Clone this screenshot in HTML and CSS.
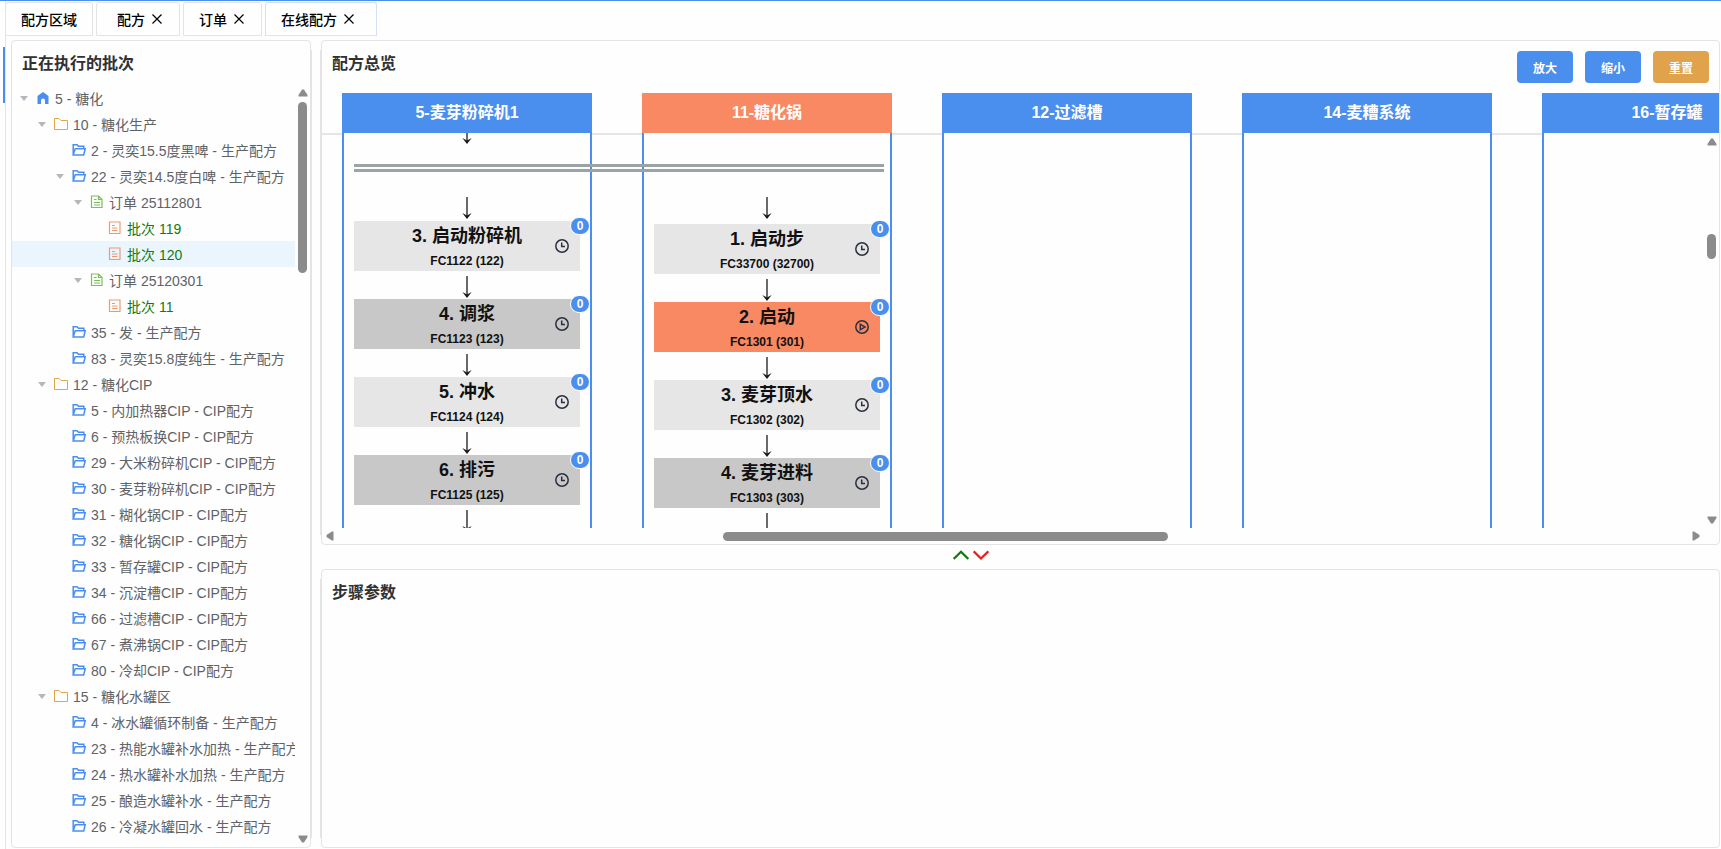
FILE: index.html
```html
<!DOCTYPE html>
<html lang="zh-CN">
<head>
  <meta charset="UTF-8">
  <title>在线配方</title>
  <link rel="stylesheet" href="styles.css">
</head>
<body>

  <svg class="sprite" aria-hidden="true">
    <symbol id="home" viewBox="0 0 14 14"><path fill="currentColor" d="M7 1 1.500 5v8H5V9.500a2 2 0 0 1 4 0V13h3.500V5z"/></symbol>
    <symbol id="folder" viewBox="0 0 14 14"><path fill="none" stroke="currentColor" d="M.5 1.500h4.500l2 2h6.500v9H.5z"/></symbol>
    <symbol id="opened" viewBox="0 0 14 14"><path fill="none" stroke="currentColor" stroke-width="1.500" d="M1.200 12V1.700H5l1.500 1.600h5.300V5.500M1.200 12l2-6.200h10l-1.500 6.200z"/></symbol>
    <symbol id="order" viewBox="0 0 14 14"><path fill="none" stroke="currentColor" stroke-width="1.200" d="M1.500 1h7l3.500 3.500v8H1.500zM8.500 1v3.500H12M4 4.500h2.500M4 7.500h6M4 10h6"/></symbol>
    <symbol id="batch" viewBox="0 0 14 14"><path fill="none" stroke="currentColor" stroke-width="1.200" d="M1.500 1h10.500v11.500H1.500zM4 4.500h3M4 7h5.500M4 9.500h5.500"/></symbol>
    <symbol id="close" viewBox="0 0 10 10"><path fill="none" stroke="currentColor" stroke-width="1.200" d="M.5.5l9 9M9.500.5l-9 9"/></symbol>
    <symbol id="arrow" viewBox="0 0 10 22"><path fill="none" stroke="currentColor" stroke-width="1.300" d="M5 0v20"/><path fill="currentColor" d="M.3 16 5 18.500 9.700 16 5 22z"/></symbol>
    <symbol id="clock" viewBox="0 0 14 14"><circle cx="7" cy="7" r="6.200" fill="none" stroke="currentColor" stroke-width="1.500"/><path fill="none" stroke="currentColor" stroke-width="1.500" d="M6.700 3.500v4H10"/></symbol>
    <symbol id="play" viewBox="0 0 14 14"><circle cx="7" cy="7" r="6.200" fill="none" stroke="currentColor" stroke-width="1.500"/><path fill="none" stroke="currentColor" stroke-width="1.500" d="M5.300 4.200v5.600L10 7z"/></symbol>
    <symbol id="up" viewBox="0 0 16 10"><path fill="none" stroke="currentColor" stroke-width="2.200" d="M.7 8.900 8 1.700l7.300 7.200"/></symbol>
    <symbol id="down" viewBox="0 0 16 10"><path fill="none" stroke="currentColor" stroke-width="2.200" d="M.7 1.300 8 8.500l7.300-7.200"/></symbol>
    <symbol id="tri" viewBox="0 0 10 8"><path fill="currentColor" d="M4 .5h2L9.500 6v1.500h-9V6z"/></symbol>
  </svg>

  <div class="app">
    <div class="rail"></div>
    <main class="main">
      <nav class="tabs">
        <div class="tab"><a href="#">配方区域</a></div>
        <div class="tab tab-wide"><a href="#">配方</a><button aria-label="关闭"><svg><use href="#close"/></svg></button></div>
        <div class="tab"><a href="#">订单</a><button aria-label="关闭"><svg><use href="#close"/></svg></button></div>
        <div class="tab active"><a href="#">在线配方</a><button aria-label="关闭"><svg><use href="#close"/></svg></button></div>
      </nav>

      <div class="content">
        <section class="card side">
          <h2>正在执行的批次</h2>
          <div class="tree-wrap">
            <ul class="tree">
              <li class="l0 open"><svg class="blue"><use href="#home"/></svg>5 - 糖化</li>
              <li class="l1 open"><svg class="gold"><use href="#folder"/></svg>10 - 糖化生产</li>
              <li class="l2"><svg class="blue"><use href="#opened"/></svg>2 - 灵奕15.5度黑啤 - 生产配方</li>
              <li class="l2 open"><svg class="blue"><use href="#opened"/></svg>22 - 灵奕14.5度白啤 - 生产配方</li>
              <li class="l3 open"><svg class="green"><use href="#order"/></svg>订单 25112801</li>
              <li class="l4 batch"><svg class="orange"><use href="#batch"/></svg>批次 119</li>
              <li class="l4 batch current"><svg class="orange"><use href="#batch"/></svg>批次 120</li>
              <li class="l3 open"><svg class="green"><use href="#order"/></svg>订单 25120301</li>
              <li class="l4 batch"><svg class="orange"><use href="#batch"/></svg>批次 11</li>
              <li class="l2"><svg class="blue"><use href="#opened"/></svg>35 - 发 - 生产配方</li>
              <li class="l2"><svg class="blue"><use href="#opened"/></svg>83 - 灵奕15.8度纯生 - 生产配方</li>
              <li class="l1 open"><svg class="gold"><use href="#folder"/></svg>12 - 糖化CIP</li>
              <li class="l2"><svg class="blue"><use href="#opened"/></svg>5 - 内加热器CIP - CIP配方</li>
              <li class="l2"><svg class="blue"><use href="#opened"/></svg>6 - 预热板换CIP - CIP配方</li>
              <li class="l2"><svg class="blue"><use href="#opened"/></svg>29 - 大米粉碎机CIP - CIP配方</li>
              <li class="l2"><svg class="blue"><use href="#opened"/></svg>30 - 麦芽粉碎机CIP - CIP配方</li>
              <li class="l2"><svg class="blue"><use href="#opened"/></svg>31 - 糊化锅CIP - CIP配方</li>
              <li class="l2"><svg class="blue"><use href="#opened"/></svg>32 - 糖化锅CIP - CIP配方</li>
              <li class="l2"><svg class="blue"><use href="#opened"/></svg>33 - 暂存罐CIP - CIP配方</li>
              <li class="l2"><svg class="blue"><use href="#opened"/></svg>34 - 沉淀槽CIP - CIP配方</li>
              <li class="l2"><svg class="blue"><use href="#opened"/></svg>66 - 过滤槽CIP - CIP配方</li>
              <li class="l2"><svg class="blue"><use href="#opened"/></svg>67 - 煮沸锅CIP - CIP配方</li>
              <li class="l2"><svg class="blue"><use href="#opened"/></svg>80 - 冷却CIP - CIP配方</li>
              <li class="l1 open"><svg class="gold"><use href="#folder"/></svg>15 - 糖化水罐区</li>
              <li class="l2"><svg class="blue"><use href="#opened"/></svg>4 - 冰水罐循环制备 - 生产配方</li>
              <li class="l2"><svg class="blue"><use href="#opened"/></svg>23 - 热能水罐补水加热 - 生产配方</li>
              <li class="l2"><svg class="blue"><use href="#opened"/></svg>24 - 热水罐补水加热 - 生产配方</li>
              <li class="l2"><svg class="blue"><use href="#opened"/></svg>25 - 酿造水罐补水 - 生产配方</li>
              <li class="l2"><svg class="blue"><use href="#opened"/></svg>26 - 冷凝水罐回水 - 生产配方</li>
            </ul>
            <div class="vbar">
              <svg><use href="#tri"/></svg>
              <div class="track"><div class="thumb tree-thumb"></div></div>
              <svg class="flip"><use href="#tri"/></svg>
            </div>
          </div>
        </section>

        <div class="right">
          <section class="card overview">
            <header class="card-head">
              <h2>配方总览</h2>
              <div class="actions">
                <button class="btn">放大</button>
                <button class="btn">缩小</button>
                <button class="btn warn">重置</button>
              </div>
            </header>

            <div class="canvas">
              <div class="heads">
                <div class="head">5-麦芽粉碎机1</div>
                <div class="head running">11-糖化锅</div>
                <div class="head">12-过滤槽</div>
                <div class="head">14-麦糟系统</div>
                <div class="head">16-暂存罐</div>
              </div>
              <div class="lanes">
                <div class="lane">
                  <svg class="arrow cut"><use href="#arrow"/></svg>
                  <div class="sync"></div>
                  <svg class="arrow"><use href="#arrow"/></svg>
                  <div class="step"><b>3. 启动粉碎机</b><span>FC1122 (122)</span><svg><use href="#clock"/></svg><i>0</i></div>
                  <svg class="arrow"><use href="#arrow"/></svg>
                  <div class="step dark"><b>4. 调浆</b><span>FC1123 (123)</span><svg><use href="#clock"/></svg><i>0</i></div>
                  <svg class="arrow"><use href="#arrow"/></svg>
                  <div class="step"><b>5. 冲水</b><span>FC1124 (124)</span><svg><use href="#clock"/></svg><i>0</i></div>
                  <svg class="arrow"><use href="#arrow"/></svg>
                  <div class="step dark"><b>6. 排污</b><span>FC1125 (125)</span><svg><use href="#clock"/></svg><i>0</i></div>
                  <svg class="arrow"><use href="#arrow"/></svg>
                </div>
                <div class="lane second">
                  <svg class="arrow"><use href="#arrow"/></svg>
                  <div class="step"><b>1. 启动步</b><span>FC33700 (32700)</span><svg><use href="#clock"/></svg><i>0</i></div>
                  <svg class="arrow"><use href="#arrow"/></svg>
                  <div class="step running"><b>2. 启动</b><span>FC1301 (301)</span><svg><use href="#play"/></svg><i>0</i></div>
                  <svg class="arrow"><use href="#arrow"/></svg>
                  <div class="step"><b>3. 麦芽顶水</b><span>FC1302 (302)</span><svg><use href="#clock"/></svg><i>0</i></div>
                  <svg class="arrow"><use href="#arrow"/></svg>
                  <div class="step dark"><b>4. 麦芽进料</b><span>FC1303 (303)</span><svg><use href="#clock"/></svg><i>0</i></div>
                  <svg class="arrow"><use href="#arrow"/></svg>
                </div>
                <div class="lane"></div>
                <div class="lane"></div>
                <div class="lane"></div>
              </div>
              <div class="vbar canvas-bar">
                <svg><use href="#tri"/></svg>
                <div class="track"><div class="thumb canvas-thumb"></div></div>
                <svg class="flip"><use href="#tri"/></svg>
              </div>
            </div>

            <div class="hbar">
              <svg class="turn-left"><use href="#tri"/></svg>
              <div class="track"><div class="thumb"></div></div>
              <svg class="turn-right"><use href="#tri"/></svg>
            </div>
          </section>

          <div class="resize">
            <button class="up" aria-label="上移"><svg><use href="#up"/></svg></button>
            <button class="down" aria-label="下移"><svg><use href="#down"/></svg></button>
          </div>

          <section class="card params">
            <h2>步骤参数</h2>
          </section>
        </div>
      </div>
    </main>
  </div>

</body>
</html>
```
FILE: styles.css
```css
* { box-sizing: border-box; }
body { margin: 0; background: #fefefe; color: #111; font: 14px "Liberation Sans", "Noto Sans CJK SC", sans-serif; }
h2 { margin: 0; font-size: 16px; line-height: 24px; color: #303133; }
ul { margin: 0; padding: 0; list-style: none; }
button { padding: 0; border: 0; background: none; font: inherit; cursor: pointer; }
svg { display: block; flex: none; }
.sprite { position: absolute; width: 0; height: 0; }

.app { display: flex; height: 100vh; border-top: 1px solid #4a8fee; overflow: hidden; }
.rail { flex: none; width: 5px; height: 56px; margin-top: 46px; border-right: 2px solid #4a8fee; }
.main { flex: 1; min-width: 0; display: flex; flex-direction: column; border-left: 1px solid #e4e4e6; }

/* tabs */
.tabs { display: flex; gap: 3px; padding-top: 1px; }
.tab { display: flex; align-items: center; gap: 7px; height: 34px; padding: 0 17px 0 15px; border: 1px solid #e4e4e6; border-radius: 3px 3px 0 0; }
.tab:first-child { margin-left: -1px; padding-right: 15px; }
.tab-wide { padding-left: 20px; }
.tab.active { padding-right: 22px; border-color: #d0e0f6 #d0e0f6 #e4e4e6; }
.tab a { color: #000; font-weight: 500; text-decoration: none; }
.tab svg { width: 10px; height: 10px; }

.content { flex: 1; min-height: 0; display: flex; gap: 10px; padding: 4px 1px 1px 5px; }
.card { border: 1px solid #e4e4e6; border-radius: 4px; background: #fefefe; overflow: hidden; }

/* batch tree */
.side { flex: none; width: 300px; display: flex; flex-direction: column; box-shadow: 11px 0 0 -10px #e4e4e6; }
.side h2 { padding: 11px 10px 9px; }
.tree-wrap { flex: 1; min-height: 0; display: flex; gap: 3px; }
.tree { flex: 1; min-width: 0; overflow: hidden; }
.tree li { display: flex; align-items: center; height: 26px; padding-left: 24px; color: #606266; white-space: nowrap; }
.tree li svg { width: 14px; height: 14px; margin-right: 5px; }
.tree .l1 { padding-left: 42px; }
.tree .l2 { padding-left: 60px; }
.tree .l3 { padding-left: 78px; }
.tree .l4 { padding-left: 96px; }
.tree .open::before { content: ""; width: 0; margin: 0 8px 0 -16px; border: 4px solid transparent; border-top: 5px solid #b4b7be; border-bottom: 0; }
.tree .batch { color: #107c10; }
.tree .current { background: #eaf5fe; }
.blue { color: #4a8fee; }
.gold { color: #e2a44c; }
.green { color: #75c154; }
.orange { color: #ee9a6c; }

/* scroll bars */
.vbar { display: flex; flex-direction: column; gap: 5px; width: 10px; padding: 4px 0; color: #8b8b8b; }
.vbar svg, .hbar svg { width: 10px; height: 8px; }
.flip { transform: rotate(180deg); }
.track { flex: 1; }
.thumb { background: #8b8b8b; border-radius: 5px; }
.vbar .thumb { width: 9px; }
.side .vbar { margin-right: 2px; }
.tree-thumb { height: 171px; }
.hbar { display: flex; align-items: center; gap: 4px; height: 16px; padding: 0 18px 0 3px; color: #8b8b8b; }
.hbar .thumb { width: 33%; height: 9px; margin-left: 28.5%; }
.turn-left { transform: rotate(-90deg); }
.turn-right { transform: rotate(90deg); }

/* overview */
.right { flex: 1; min-width: 0; display: flex; flex-direction: column; }
.right .card { box-shadow: -11px 0 0 -10px #e4e4e6; }
.overview { flex: 1; min-height: 0; display: flex; flex-direction: column; }
.card-head { display: flex; justify-content: space-between; padding: 10px; }
.card-head h2 { padding-top: 1px; }
.actions { display: flex; gap: 12px; }
.btn { width: 56px; height: 32px; border-radius: 4px; background: #4a8fee; color: #fff; font-size: 12px; font-weight: bold; }
.warn { background: #e0a24a; }

.canvas { position: relative; flex: 1; min-height: 0; display: flex; flex-direction: column; overflow: hidden; }
.heads, .lanes { display: flex; gap: 50px; padding-left: 20px; }
.head { flex: none; width: 250px; height: 40px; line-height: 40px; background: #4a8fee; color: #fff; font-size: 16px; font-weight: bold; text-align: center; }
.head.running, .step.running { background: #f88962; }
.lanes { flex: 1; min-height: 0; background: linear-gradient(#e5e5e5 2px, transparent 2px); overflow: hidden; }
.lane { flex: none; width: 250px; padding: 0 10px; border: solid #4a8fee; border-width: 0 2px; background: #fefefe; }
.second { padding-top: 64px; }
.arrow { width: 10px; height: 22px; margin: 5px 108px 1px; color: #1a1a1a; }
.cut { margin-top: -11px; margin-bottom: 20px; }
.sync { position: relative; z-index: 1; width: 530px; height: 8px; margin-bottom: 25px; border: solid #9aa4a4; border-width: 3px 0; }
.sync + .arrow, .second .arrow:first-child { margin-top: 0; margin-bottom: 2px; }
.second .arrow:first-child { margin-bottom: 5px; }
.step { position: relative; width: 226px; height: 50px; background: #e6e6e6; text-align: center; }
.step.dark { background: #c8c8c8; }
.step b { display: block; font-size: 18px; line-height: 30px; }
.step span { display: block; font-size: 12px; font-weight: bold; line-height: 20px; }
.step svg { position: absolute; top: 18px; right: 11px; width: 14px; height: 14px; color: #2b3040; }
.step i { position: absolute; top: -4px; right: -10px; width: 20px; height: 18px; border: 1px solid #fff; border-radius: 9px; background: #4a8fee; color: #fff; font: bold 12px/16px "Liberation Sans", sans-serif; }
.canvas-bar { position: absolute; top: 41px; right: 2px; bottom: 0; }
.canvas-thumb { height: 25px; margin-top: 83px; }

.resize { display: flex; align-items: center; justify-content: center; gap: 4px; height: 24px; padding: 0 100px 4px 0; }
.resize svg { width: 16px; height: 10px; }
.up { color: #107c10; }
.down { color: #f01818; }
.params { flex: none; height: 34.5%; padding: 11px 10px; }
```
